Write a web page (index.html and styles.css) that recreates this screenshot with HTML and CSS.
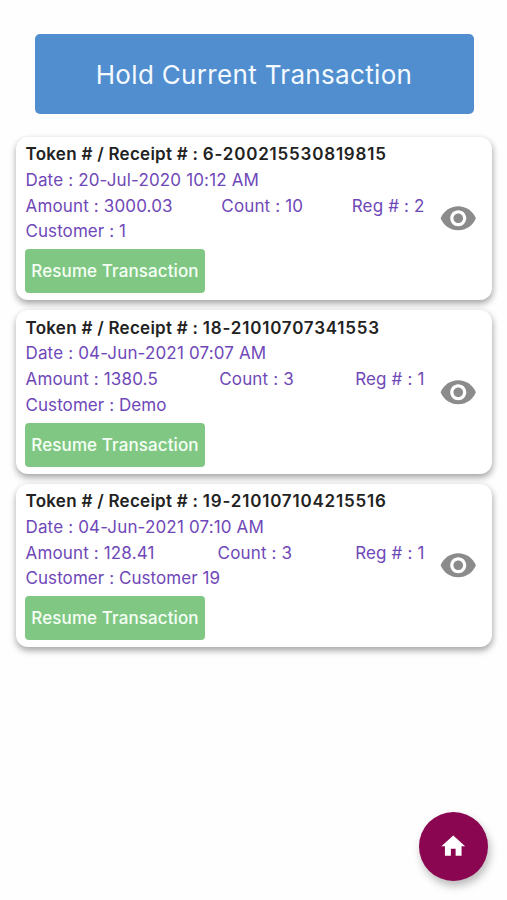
FILE: index.html
```html
<!DOCTYPE html>
<html lang="en">
<head>
    <meta charset="UTF-8">
    <meta name="viewport" content="width=device-width, initial-scale=1.0">
    <title>Hold Transactions</title>
    <link rel="stylesheet" href="styles.css">
</head>
<body>
    <button class="hold-button">Hold Current Transaction</button>

    <div class="card-list">
        <div class="card">
            <div class="card-content">
                <div class="token">Token # / Receipt # : <span class="number">6-200215530819815</span></div>
                <div class="line">Date : 20-Jul-2020 10:12 AM</div>
                <div class="line details">
                    <span>Amount : 3000.03</span>
                    <span>Count : 10</span>
                    <span>Reg # : 2</span>
                </div>
                <div class="line customer">Customer : 1</div>
                <button class="resume-button">Resume Transaction</button>
            </div>
            <svg class="eye" viewBox="0 0 24 24"><path d="M12 4.5C7 4.5 2.73 7.61 1 12c1.73 4.39 6 7.5 11 7.5s9.27-3.11 11-7.5c-1.73-4.39-6-7.5-11-7.5zM12 17c-2.76 0-5-2.24-5-5s2.24-5 5-5 5 2.24 5 5-2.24 5-5 5zm0-8c-1.66 0-3 1.34-3 3s1.34 3 3 3 3-1.34 3-3-1.34-3-3-3z"/></svg>
        </div>

        <div class="card">
            <div class="card-content">
                <div class="token">Token # / Receipt # : <span class="number">18-21010707341553</span></div>
                <div class="line">Date : 04-Jun-2021 07:07 AM</div>
                <div class="line details">
                    <span>Amount : 1380.5</span>
                    <span>Count : 3</span>
                    <span>Reg # : 1</span>
                </div>
                <div class="line customer">Customer : Demo</div>
                <button class="resume-button">Resume Transaction</button>
            </div>
            <svg class="eye" viewBox="0 0 24 24"><path d="M12 4.5C7 4.5 2.73 7.61 1 12c1.73 4.39 6 7.5 11 7.5s9.27-3.11 11-7.5c-1.73-4.39-6-7.5-11-7.5zM12 17c-2.76 0-5-2.24-5-5s2.24-5 5-5 5 2.24 5 5-2.24 5-5 5zm0-8c-1.66 0-3 1.34-3 3s1.34 3 3 3 3-1.34 3-3-1.34-3-3-3z"/></svg>
        </div>

        <div class="card">
            <div class="card-content">
                <div class="token">Token # / Receipt # : <span class="number">19-210107104215516</span></div>
                <div class="line">Date : 04-Jun-2021 07:10 AM</div>
                <div class="line details">
                    <span>Amount : 128.41</span>
                    <span>Count : 3</span>
                    <span>Reg # : 1</span>
                </div>
                <div class="line customer">Customer : Customer 19</div>
                <button class="resume-button">Resume Transaction</button>
            </div>
            <svg class="eye" viewBox="0 0 24 24"><path d="M12 4.5C7 4.5 2.73 7.61 1 12c1.73 4.39 6 7.5 11 7.5s9.27-3.11 11-7.5c-1.73-4.39-6-7.5-11-7.5zM12 17c-2.76 0-5-2.24-5-5s2.24-5 5-5 5 2.24 5 5-2.24 5-5 5zm0-8c-1.66 0-3 1.34-3 3s1.34 3 3 3 3-1.34 3-3-1.34-3-3-3z"/></svg>
        </div>
    </div>

    <button class="home-button" aria-label="Home">
        <svg viewBox="0 0 24 24"><path d="M10 20v-6h4v6h5v-8h3L12 3 2 12h3v8z"/></svg>
    </button>
</body>
</html>
```
FILE: styles.css
```css
* {
    box-sizing: border-box;
}

body {
    font-family: Inter, "Liberation Sans", sans-serif;
    margin: 0;
    padding: 34px 15px 0 16px;
    height: 900px;
    background-color: #fefefe;
    display: flex;
    flex-direction: column;
    overflow: hidden;
}

button {
    font-family: inherit;
    border: none;
    padding: 0;
    cursor: pointer;
    white-space: nowrap;
}

.hold-button {
    height: 80px;
    flex-shrink: 0;
    margin: 0 18.5px;
    border-radius: 5px;
    background-color: #508ecf;
    color: #f4faff;
    font-size: 26px;
    letter-spacing: 0.33px;
}

.card-list {
    display: flex;
    flex-direction: column;
    gap: 10px;
    margin-top: 22.5px;
}

.card {
    display: flex;
    align-items: center;
    justify-content: space-between;
    height: 163.5px;
    padding: 0 14.5px 0 9.5px;
    border-radius: 12px;
    background-color: #fff;
    box-shadow: 0 4px 7px rgba(0, 0, 0, 0.25), 1px 2px 6px rgba(0, 0, 0, 0.15);
}

.card-content {
    width: 399px;
    padding-bottom: 1px;
    font-size: 17px;
    line-height: 25.7px;
}

.token {
    color: #222;
    font-weight: 600;
    letter-spacing: 0.27px;
    white-space: nowrap;
}

.number {
    letter-spacing: 0.8px;
}

.line {
    color: #6f48b8;
    letter-spacing: 0.15px;
    white-space: nowrap;
}

.customer {
    letter-spacing: 0.07px;
}

.details {
    display: flex;
    justify-content: space-between;
}

.resume-button {
    display: block;
    width: 180px;
    height: 44px;
    margin: 4.5px 0 0 -0.5px;
    border-radius: 4px;
    background-color: #81c784;
    color: #f5fff5;
    font-size: 17px;
    font-weight: 500;
    letter-spacing: 0.1px;
}

.eye {
    width: 38.5px;
    height: 38.5px;
    fill: #8b8b8b;
}

/* floats over the list */
.home-button {
    position: absolute;
    right: 19.5px;
    bottom: 19.5px;
    width: 69px;
    height: 69px;
    border-radius: 50%;
    background-color: #8a0651;
    box-shadow: 2px 5px 9px rgba(0, 0, 0, 0.27);
    display: flex;
    align-items: center;
    justify-content: center;
}

.home-button svg {
    width: 28.5px;
    height: 28.5px;
    fill: #fff;
}
```
